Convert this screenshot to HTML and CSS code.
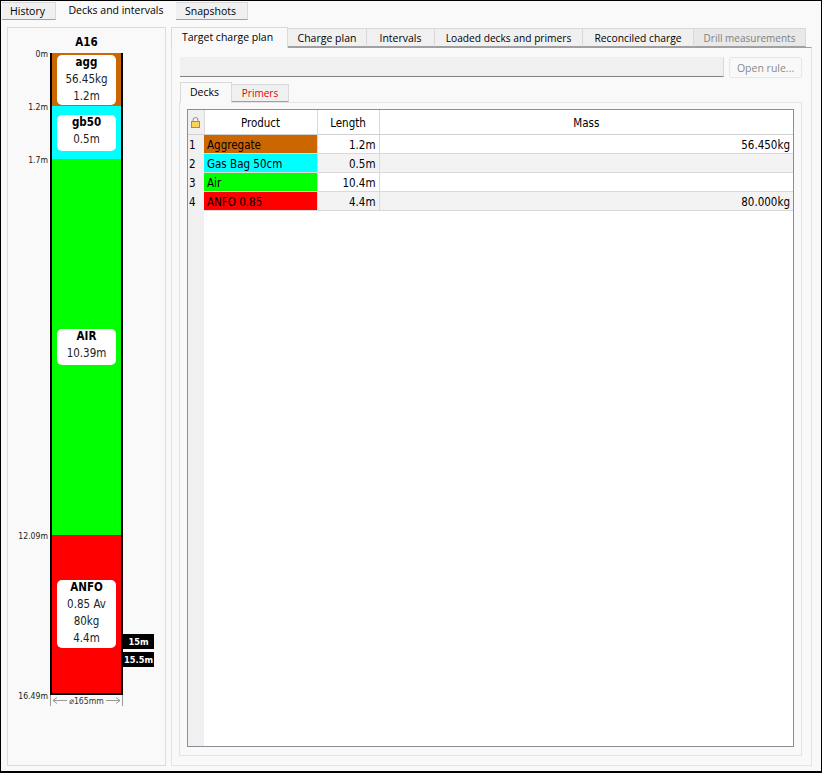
FILE: index.html
```html
<!DOCTYPE html>
<html lang="en">
<head>
  <meta charset="UTF-8" />
  <title>Decks and intervals</title>
  <link rel="stylesheet" href="styles.css">
</head>
<body>
  <div class="window">
    <div class="top-tabs">
      <div class="tab top-tab tab-history">History</div>
      <div class="tab top-tab tab-active tab-decks">Decks and intervals</div>
      <div class="tab top-tab tab-snapshots">Snapshots</div>
    </div>

    <div class="main">
      <div class="hole-panel">
        <div class="hole-title">A16</div>
        <div class="hole">
          <span class="depth depth-top">0m</span>
          <div class="deck deck-agg">
            <div class="deck-card"><strong>agg</strong><span>56.45kg</span><span>1.2m</span></div>
            <span class="depth">1.2m</span>
          </div>
          <div class="deck deck-gas">
            <div class="deck-card"><strong>gb50</strong><span>0.5m</span></div>
            <span class="depth">1.7m</span>
          </div>
          <div class="deck deck-air">
            <div class="deck-card"><strong>AIR</strong><span>10.39m</span></div>
            <span class="depth">12.09m</span>
          </div>
          <div class="deck deck-anfo">
            <div class="deck-card"><strong>ANFO</strong><span>0.85 Av</span><span>80kg</span><span>4.4m</span></div>
            <span class="depth depth-bottom">16.49m</span>
            <span class="marker marker-15">15m</span>
            <span class="marker marker-155">15.5m</span>
          </div>
        </div>
        <div class="diameter">
          <svg class="arrow" width="15" height="7" viewBox="0 0 15 7"><path d="M15 3.5H1M5 .5 1 3.5l4 3" fill="none" stroke="#999" /></svg>
          <span>⌀165mm</span>
          <svg class="arrow" width="15" height="7" viewBox="0 0 15 7"><path d="M0 3.5h14M10 .5l4 3-4 3" fill="none" stroke="#999" /></svg>
        </div>
      </div>

      <div class="plan-panel">
        <div class="plan-tabs">
          <div class="tab plan-tab tab-active tab-target">Target charge plan</div>
          <div class="tab plan-tab tab-charge">Charge plan</div>
          <div class="tab plan-tab tab-intervals">Intervals</div>
          <div class="tab plan-tab tab-loaded">Loaded decks and primers</div>
          <div class="tab plan-tab tab-reconciled">Reconciled charge</div>
          <div class="tab plan-tab tab-disabled tab-drill">Drill measurements</div>
        </div>
        <div class="plan-pane">
          <div class="rule-row">
            <div class="rule-field"></div>
            <button class="rule-button">Open rule...</button>
          </div>
          <div class="deck-tabs">
            <div class="tab deck-tab tab-active tab-decks-inner">Decks</div>
            <div class="tab deck-tab tab-primers">Primers</div>
          </div>
          <div class="deck-pane">
            <div class="table-wrap">
              <table class="deck-table">
                <colgroup>
                  <col class="col-num"><col class="col-product"><col class="col-length"><col class="col-mass">
                </colgroup>
                <thead>
                  <tr>
                    <th class="lock-cell">
                      <svg width="9" height="11" viewBox="0 0 9 11"><path d="M2 5V3a2.500 2.500 0 0 1 5 0V5" fill="none" stroke="#8c8c8c" /><rect x=".5" y="4.500" width="8" height="6" fill="#f7d25f" stroke="#a98f3e" /></svg>
                    </th>
                    <th>Product</th>
                    <th>Length</th>
                    <th>Mass</th>
                  </tr>
                </thead>
                <tbody>
                  <tr>
                    <td class="num">1</td>
                    <td class="product product-agg">Aggregate</td>
                    <td class="right">1.2m</td>
                    <td class="right">56.450kg</td>
                  </tr>
                  <tr class="alt">
                    <td class="num">2</td>
                    <td class="product product-gas">Gas Bag 50cm</td>
                    <td class="right">0.5m</td>
                    <td class="right"></td>
                  </tr>
                  <tr>
                    <td class="num">3</td>
                    <td class="product product-air">Air</td>
                    <td class="right">10.4m</td>
                    <td class="right"></td>
                  </tr>
                  <tr class="alt">
                    <td class="num">4</td>
                    <td class="product product-anfo">ANFO 0.85</td>
                    <td class="right">4.4m</td>
                    <td class="right">80.000kg</td>
                  </tr>
                </tbody>
              </table>
            </div>
          </div>
        </div>
      </div>
    </div>
  </div>
</body>
</html>
```

FILE: styles.css
```css
* {
  box-sizing: border-box;
}

body {
  margin: 0;
  font-family: 'Open Sans', 'Noto Sans', sans-serif;
  font-size: 10.5px;
  color: #000;
  background: #f9f9f9;
}

.window {
  width: 822px;
  height: 773px;
  display: flex;
  flex-direction: column;
  background: #f9f9f9;
  border: 1px solid #000;
  border-width: 1px 1px 2px 1px;
}

.tab {
  display: flex;
  align-items: center;
  justify-content: center;
  white-space: nowrap;
  background: #f0f0f0;
  border: 1px solid #d9d9d9;
  border-bottom: 1px solid #a0a0a0;
  border-left: none;
}

.tab-active {
  background: #f9f9f9;
  border-bottom: none;
  padding-bottom: 2px;
}

/* top level tabs */
.top-tabs {
  display: flex;
  align-items: flex-start;
  height: 19px;
  padding-left: 1px;
}

.top-tab {
  height: 18px;
  margin-top: 1px;
}

.top-tab.tab-active {
  height: 19px;
  margin-top: 0;
  padding-bottom: 1px;
  border: none;
}

.tab-history { width: 54px; padding-right: 2px; }
.tab-decks { width: 120px; }
.tab-snapshots { width: 72px; padding-right: 2px; }

.main {
  flex: 1;
  display: flex;
  gap: 5px;
  padding: 7px 9px 5px 6px;
}

/* hole diagram */
.hole-panel {
  flex: none;
  width: 159px;
  border: 1px solid #dcdcdc;
  padding-left: 42px;
}

.hole-title {
  width: 73px;
  height: 25px;
  padding-top: 7px;
  text-align: center;
  font-family: 'DejaVu Sans Condensed', 'DejaVu Sans', sans-serif;
  font-size: 11.500px;
  font-weight: bold;
  line-height: 14px;
}

.hole {
  position: relative;
  width: 73px;
  border-left: 2px solid #000;
  border-right: 2px solid #000;
  border-bottom: 2px solid #000;
}

.deck {
  position: relative;
  display: flex;
  align-items: center;
  justify-content: center;
}

.deck-agg { height: 53px; background: #cc6600; }
.deck-gas { height: 53px; background: #00ffff; }
.deck-air { height: 376px; background: #00ff00; }
.deck-anfo { height: 158px; background: #ff0000; }

.deck-card {
  width: 59px;
  display: flex;
  flex-direction: column;
  align-items: center;
  padding: 1px 0 3px;
  background: #fff;
  border-radius: 5px;
  font-family: 'DejaVu Sans Condensed', 'DejaVu Sans', sans-serif;
  font-size: 11.500px;
  line-height: 17px;
  color: #222;
}

.deck-agg .deck-card { padding-bottom: 0; }
.deck-anfo .deck-card { padding-bottom: 1px; }

.deck-card strong {
  color: #000;
  line-height: 12px;
  margin-bottom: 3px;
}

.depth {
  position: absolute;
  right: 100%;
  bottom: -7px;
  margin-right: 4px;
  font-family: 'DejaVu Sans Condensed', 'DejaVu Sans', sans-serif;
  font-size: 8.600px;
  line-height: 12px;
  color: #222;
}

.depth-top {
  top: -5px;
  bottom: auto;
}

.depth-bottom {
  bottom: -9px;
}

.marker {
  position: absolute;
  left: 100%;
  margin-left: 2px;
  width: 31px;
  height: 15px;
  background: #000;
  color: #fff;
  font-family: 'DejaVu Sans Condensed', 'DejaVu Sans', sans-serif;
  font-size: 9.200px;
  font-weight: bold;
  line-height: 15px;
  text-align: center;
}

.marker-15 { top: 99px; }
.marker-155 { top: 117px; }

.diameter {
  width: 73px;
  height: 11px;
  display: flex;
  align-items: center;
  justify-content: space-between;
  padding: 0 1px;
  border-left: 1px solid #999;
  border-right: 1px solid #999;
  font-family: 'DejaVu Sans Condensed', 'DejaVu Sans', sans-serif;
  font-size: 8.600px;
  color: #333;
}

/* plan tabs */
.plan-panel {
  flex: 1;
  min-width: 0;
  display: flex;
  flex-direction: column;
}

.plan-tabs {
  display: flex;
  align-items: flex-start;
  height: 20px;
}

.plan-tab {
  height: 19px;
  margin-top: 1px;
}

.plan-tab.tab-active {
  height: 21px;
  margin-top: 0;
  border-left: 1px solid #d9d9d9;
  border-bottom: none;
  position: relative;
  z-index: 1;
}

.tab-target { padding-right: 4px; width: 117px; }
.tab-charge { width: 79px; }
.tab-intervals { width: 68px; }
.tab-loaded { width: 148px; font-size: 10.2px; }
.tab-reconciled { width: 111px; font-size: 10.3px; }
.tab-drill { width: 112px; font-size: 10px; }

.tab-disabled {
  background: #e8e8e8;
  color: #808080;
}

.plan-pane {
  flex: 1;
  display: flex;
  flex-direction: column;
  padding: 9px 9px 9px 7px;
  border: 1px solid #e4e4e4;
  border-top: 1px solid #a0a0a0;
}

.rule-row {
  display: flex;
  gap: 5px;
  height: 21px;
  padding-left: 1px;
}

.rule-field {
  width: 545px;
  height: 20px;
  background: #f0f0f0;
  border-right: 1px solid #d9d9d9;
  border-bottom: 1px solid #808080;
}

.rule-button {
  width: 73px;
  padding: 0;
  background: #f9f9f9;
  border: 1px solid #e6e6e6;
  border-radius: 3px;
  font: inherit;
  color: #8a8a8a;
}

/* decks and primers tabs */
.deck-tabs {
  display: flex;
  align-items: flex-start;
  height: 20px;
  margin-top: 4px;
  padding-left: 1px;
}

.deck-tab {
  height: 18px;
  margin-top: 2px;
}

.deck-tab.tab-active {
  height: 21px;
  margin-top: 0;
  border-left: 1px solid #d9d9d9;
  border-bottom: none;
  position: relative;
  z-index: 1;
}

.tab-decks-inner { width: 52px; padding-right: 3px; }
.tab-primers { width: 57px; color: #e60000; font-size: 10px; }

.deck-pane {
  flex: 1;
  display: flex;
  min-width: 0;
  padding: 6px 7px 8px 7px;
  border: 1px solid #e4e4e4;
}

.table-wrap {
  flex: 1;
  min-width: 0;
  border: 1px solid #8b8e99;
  background: linear-gradient(to right, #f0f0f0 16px, #fff 16px);
}

.deck-table {
  width: 100%;
  table-layout: fixed;
  border-collapse: collapse;
  font-family: 'DejaVu Sans Condensed', 'DejaVu Sans', sans-serif;
  font-size: 11.500px;
}

.col-num { width: 16px; }
.col-product { width: 113px; }
.col-length { width: 62px; }

.deck-table th {
  height: 24px;
  padding: 2px 0 0;
  background: #fff;
  font-weight: normal;
  border-right: 1px solid #d9d9d9;
  border-bottom: 1px solid #d0d0d0;
}

.deck-table th:last-child {
  border-right: none;
}

.deck-table .lock-cell {
  line-height: 0;
  background: #f0f0f0;
}

.deck-table td {
  height: 19px;
  padding: 3px 3px 0;
  border-right: 1px solid #d9d9d9;
  border-bottom: 1px solid #d9d9d9;
  white-space: nowrap;
}

.deck-table td:last-child {
  border-right: none;
}

.deck-table .num {
  padding: 3px 0 0 1px;
  background: #f0f0f0;
  border: none;
}

.alt td {
  background: #f3f3f3;
}

.right {
  text-align: right;
}

.deck-table .product-agg { background: #cc6600; }
.deck-table .product-gas { background: #00ffff; }
.deck-table .product-air { background: #00ff00; }
.deck-table .product-anfo { background: #ff0000; }
```
